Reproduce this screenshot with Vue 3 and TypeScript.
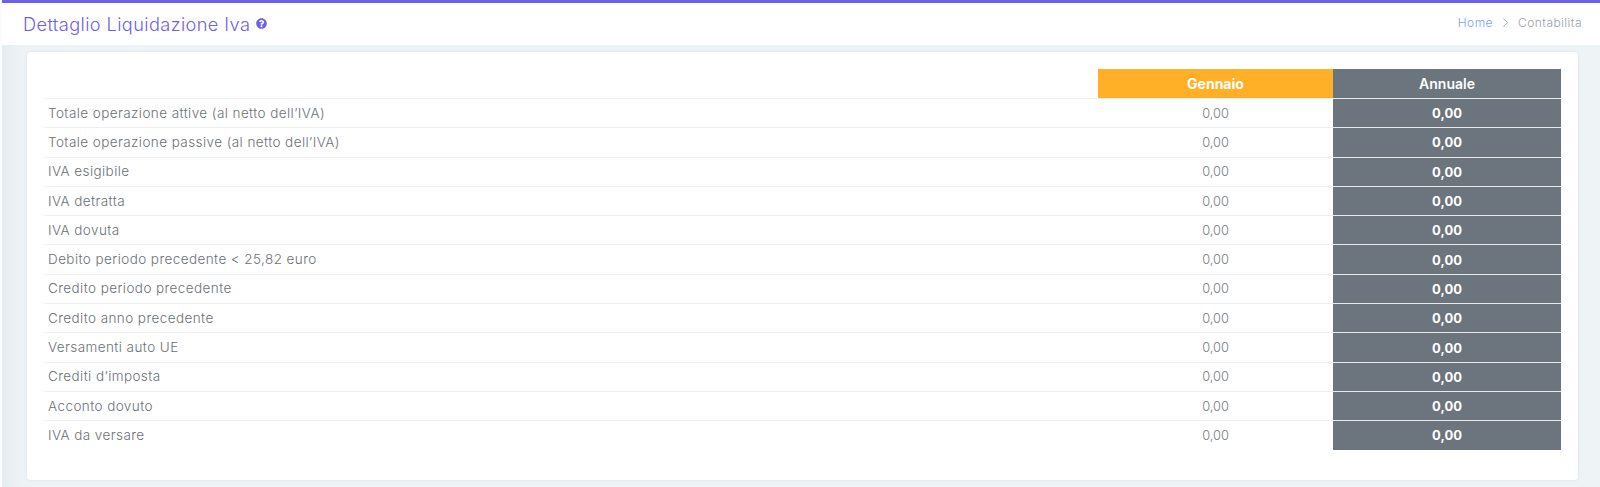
<script setup lang="ts">
const rows: string[] = [
  'Totale operazione attive (al netto dell’IVA)',
  'Totale operazione passive (al netto dell’IVA)',
  'IVA esigibile',
  'IVA detratta',
  'IVA dovuta',
  'Debito periodo precedente < 25,82 euro',
  'Credito periodo precedente',
  'Credito anno precedente',
  'Versamenti auto UE',
  'Crediti d’imposta',
  'Acconto dovuto',
  'IVA da versare',
]
</script>

<template>
  <div class="page">
    <header class="topbar">
      <div class="title">
        <h1>Dettaglio Liquidazione Iva</h1>
        <svg class="help" viewBox="0 0 512 512" aria-hidden="true">
          <path fill="currentColor" d="M504 256c0 136.997-111.043 248-248 248S8 392.997 8 256C8 119.083 119.043 8 256 8s248 111.083 248 248zM262.655 90c-54.497 0-89.255 22.957-116.549 63.758-3.536 5.286-2.353 12.415 2.715 16.258l34.699 26.31c5.205 3.947 12.621 3.008 16.665-2.122 17.864-22.658 30.113-35.797 57.303-35.797 20.429 0 45.698 13.148 45.698 32.958 0 14.976-12.363 22.667-32.534 33.976C247.128 238.528 216 254.941 216 296v4c0 6.627 5.373 12 12 12h56c6.627 0 12-5.373 12-12v-1.333c0-28.462 83.186-29.647 83.186-106.667 0-58.002-60.165-102-116.531-102zM256 338c-25.365 0-46 20.635-46 46 0 25.364 20.635 46 46 46s46-20.636 46-46c0-25.365-20.635-46-46-46z" />
        </svg>
      </div>
      <nav class="crumbs">
        <a>Home</a>
        <svg class="sep" viewBox="0 0 8 12" aria-hidden="true"><path d="M1.5 1.5 6.5 6l-5 4.5" fill="none" stroke="currentColor" stroke-width="1" /></svg>
        <span>Contabilita</span>
      </nav>
    </header>
    <main class="content">
      <section class="card">
        <div class="grid">
          <div class="row head">
            <div class="label"></div>
            <div class="month">Gennaio</div>
            <div class="year">Annuale</div>
          </div>
          <div v-for="r in rows" :key="r" class="row">
            <div class="label">{{ r }}</div>
            <div class="month">0,00</div>
            <div class="year">0,00</div>
          </div>
        </div>
      </section>
    </main>
  </div>
</template>

<style>
html, body { margin: 0; background: #fff; }
</style>

<style scoped>
.page {
  height: 487px;
  display: flex;
  flex-direction: column;
  overflow: hidden;
  font-family: Inter, "Noto Sans", sans-serif;
  background: linear-gradient(90deg, #fbfcfd 0, #fbfcfd 2px, #e6edf1 2px, #eef3f6 27px);
}
.topbar {
  box-sizing: border-box;
  height: 45px;
  margin-left: 2px;
  border-top: 3px solid #6f5fe8;
  background: #fff;
  display: flex;
  align-items: center;
  justify-content: space-between;
  padding: 0 18px 0 21px;
}
.title { display: flex; align-items: center; gap: 6px; }
h1 {
  margin: 0;
  font-size: 18.2px;
  font-weight: 300;
  color: #6f5fe8;
  line-height: 1;
  letter-spacing: 0.4px;
}
.help { width: 11px; height: 11px; color: #6f5fe8; margin-top: -1px; }
.crumbs {
  display: flex;
  align-items: center;
  gap: 9px;
  font-size: 12px;
  font-weight: 300;
  letter-spacing: 0.45px;
  color: #9aa1a8;
  margin-top: -3px;
}
.crumbs a { color: #7f9dfb; }
.sep { width: 7px; height: 11px; color: #a2a8ae; }
.content {
  flex: 1;
  padding: 7px 22px 7px 27px;
  min-height: 0;
}
.card {
  box-sizing: border-box;
  height: 100%;
  background: #fff;
  border-radius: 4px;
  box-shadow: 0 0 3px rgba(120, 140, 155, 0.18);
  padding: 17px 17px 0;
}
.grid { display: flex; flex-direction: column; }
.row {
  display: grid;
  grid-template-columns: 1fr 235px 228px;
  height: 29.3px;
  box-sizing: border-box;
}
.row.head { height: 29px; }
.label {
  padding-left: 4px;
  padding-bottom: 1px;
  border-top: 1px solid #eef0f2;
  font-size: 13.5px;
  font-weight: 300;
  color: #6b7177;
  letter-spacing: 0.42px;
  display: flex;
  align-items: center;
}
.head .label { border-top: 0; }
.month {
  border-top: 1px solid #eef0f2;
  font-size: 12.8px;
  font-weight: 300;
  color: #757b81;
  display: flex;
  align-items: center;
  justify-content: center;
}
.year {
  background: #6c757d;
  border-top: 1px solid #e8eaec;
  color: #fff;
  font-size: 13px;
  font-weight: 700;
  display: flex;
  align-items: center;
  justify-content: center;
}
.head .month {
  background: #ffb026;
  border-top: 0;
  color: #fff;
  font-size: 14px;
  font-weight: 700;
}
.head .year { font-size: 14px; font-weight: 600; border-top: 0; }
</style>
